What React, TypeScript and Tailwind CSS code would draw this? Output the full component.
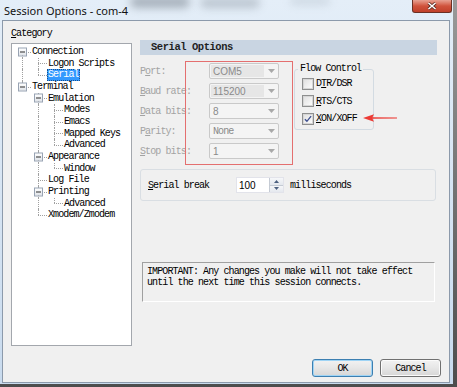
import React from "react";

type Row = {
  label: string;
  guides: ("pipe" | "none")[];
  top: boolean;
  bottom: boolean;
  box?: boolean;
  selected?: boolean;
};

const rows: Row[] = [
  { label: "Connection", guides: [], top: false, bottom: true, box: true },
  { label: "Logon Scripts", guides: ["pipe"], top: true, bottom: true },
  { label: "Serial", guides: ["pipe"], top: true, bottom: false, selected: true },
  { label: "Terminal", guides: [], top: true, bottom: false, box: true },
  { label: "Emulation", guides: ["none"], top: true, bottom: true, box: true },
  { label: "Modes", guides: ["none", "pipe"], top: true, bottom: true },
  { label: "Emacs", guides: ["none", "pipe"], top: true, bottom: true },
  { label: "Mapped Keys", guides: ["none", "pipe"], top: true, bottom: true },
  { label: "Advanced", guides: ["none", "pipe"], top: true, bottom: false },
  { label: "Appearance", guides: ["none"], top: true, bottom: true, box: true },
  { label: "Window", guides: ["none", "pipe"], top: true, bottom: false },
  { label: "Log File", guides: ["none"], top: true, bottom: true },
  { label: "Printing", guides: ["none"], top: true, bottom: true, box: true },
  { label: "Advanced", guides: ["none", "pipe"], top: true, bottom: false },
  { label: "Xmodem/Zmodem", guides: ["none"], top: true, bottom: false },
];

function TreeRow({ r }: { r: Row }) {
  return (
    <div className="flex h-[11.67px] items-center">
      {r.guides.map((g, i) => (
        <div key={i} className="relative h-full w-[16px] shrink-0">
          {g === "pipe" && (
            <div className="absolute bottom-0 left-[8px] top-0 border-l border-dotted border-[#a0a0a0]" />
          )}
        </div>
      ))}
      <div className="relative h-full w-[16px] shrink-0">
        {r.top && (
          <div className="absolute left-[8px] top-0 h-1/2 border-l border-dotted border-[#a0a0a0]" />
        )}
        {r.bottom && (
          <div className="absolute bottom-0 left-[8px] top-1/2 border-l border-dotted border-[#a0a0a0]" />
        )}
        <div className="absolute left-[8px] right-[-1px] top-1/2 border-t border-dotted border-[#a0a0a0]" />
        {r.box && (
          <div className="absolute left-[4px] top-1/2 flex h-[9px] w-[9px] -translate-y-1/2 items-center justify-center border border-[#98a3b3] bg-gradient-to-b from-white to-[#dfe3e8]">
            <div className="h-[1px] w-[5px] bg-[#2d2d2d]" />
          </div>
        )}
      </div>
      <span
        className={
          r.selected
            ? "ml-[1px] h-[12px] whitespace-nowrap border border-dotted border-[#1a4f8a] bg-[#3399ff] font-['Liberation_Mono',monospace] text-[10px] leading-[10px] tracking-[-0.9px] text-white"
            : "ml-[1px] whitespace-nowrap px-[1px] font-['Liberation_Mono',monospace] text-[10px] leading-[11.67px] tracking-[-0.9px] text-black"
        }
      >
        {r.label}
      </span>
    </div>
  );
}

function Combo({ value, split, monoText }: { value: string; split?: boolean; monoText?: boolean }) {
  return (
    <div className="flex h-[16px] w-[70px] items-center rounded-[2px] border border-[#c9c9c9] bg-[#f4f4f4]">
      <div
        className={
          split
            ? "ml-[1px] flex h-[12px] w-[53px] items-center bg-[#e6e6e6] pl-[2px]"
            : "ml-[1px] flex h-[12px] w-[53px] items-center pl-[2px]"
        }
      >
        <span
          className={
            monoText
              ? "font-['Liberation_Mono',monospace] text-[10px] tracking-[-0.9px] text-[#8a8a8a]"
              : "font-['Liberation_Sans',sans-serif] text-[10px] text-[#8a8a8a]"
          }
        >
          {value}
        </span>
      </div>
      <div className="flex flex-1 items-center justify-center">
        <svg width="7" height="4" viewBox="0 0 7 4">
          <path d="M0 0 H7 L3.5 4 Z" fill="#a8a8a8" />
        </svg>
      </div>
    </div>
  );
}

function Check({ checked, children }: { checked?: boolean; children: React.ReactNode }) {
  return (
    <div className="flex h-[17.5px] items-center">
      <div className="ml-[7px] flex h-[12px] w-[12px] items-center justify-center border border-[#8e8f8f] bg-[#f4f4f4]">
        <div className="flex h-[10px] w-[10px] items-center justify-center border border-[#d6d6d6] bg-gradient-to-br from-[#e2e2e2] to-[#fbfbfb]">
          {checked && (
            <svg width="9" height="8" viewBox="0 0 9 8">
              <path d="M1 4.2 L3.3 6.6 L8 0.8" stroke="#3d4f8f" strokeWidth="1.5" fill="none" />
            </svg>
          )}
        </div>
      </div>
      <span className="ml-[2px] font-['Liberation_Mono',monospace] text-[10px] tracking-[-0.9px] text-black">
        {children}
      </span>
    </div>
  );
}

const labelCls =
  "w-[69px] shrink-0 whitespace-nowrap font-['Liberation_Mono',monospace] text-[10px] tracking-[-0.9px] text-[#a3a3a3]";

export default function App() {
  return (
    <div className="relative h-[387px] w-[457px] overflow-hidden bg-gradient-to-b from-[#9a9a9a] to-[#4d4d4d]">
      <div className="flex h-[384px] w-[453px] flex-col bg-gradient-to-b from-[#e4eef8] to-[#c9dbee]">
        {/* title bar */}
        <div className="relative flex h-[20px] shrink-0 items-center pl-[4px]">
          <div className="absolute left-[130px] top-[-4px] h-[12px] w-[60px] rounded-full bg-[#6d7782] opacity-50 blur-[4px]" />
          <div className="absolute left-[200px] top-[-2px] h-[10px] w-[60px] rounded-full bg-[#7d8792] opacity-40 blur-[4px]" />
          <div className="absolute left-[290px] top-[-3px] h-[8px] w-[40px] rounded-full bg-[#9aa5b0] opacity-30 blur-[4px]" />
          <span className="relative font-['Noto_Sans',sans-serif] text-[11px] leading-none text-[#111]">
            Session Options - com-4
          </span>
          <div className="absolute left-[412px] top-0 flex h-[13px] w-[40px] items-center justify-center rounded-b-[3px] border border-t-0 border-[#6b3024] bg-gradient-to-b from-[#e7a192] via-[#d0533c] to-[#c0402a]">
            <svg width="10" height="8" viewBox="0 0 10 8">
              <path d="M1.5 1 L8.5 7 M8.5 1 L1.5 7" stroke="#5a2a20" strokeWidth="3" />
              <path d="M1.5 1 L8.5 7 M8.5 1 L1.5 7" stroke="#ffffff" strokeWidth="1.6" />
            </svg>
          </div>
        </div>
        {/* body */}
        <div className="mb-[1px] ml-[2px] mr-[3px] flex flex-1 flex-col border border-[#8c9aab] bg-[#f0f0f0]">
          <div className="flex h-[325px] shrink-0">
            {/* left column */}
            <div className="ml-[8px] flex flex-col">
              <div className="mt-[5px] flex h-[14px] items-center font-['Liberation_Mono',monospace] text-[10px] tracking-[-0.9px] text-black">
                <span className="underline underline-offset-1">C</span>ategory
              </div>
              <div className="mt-[3px] h-[303px] w-[121px] border border-[#a3a7ad] bg-white pl-[2px] pt-[2px]">
                {rows.map((r, i) => (
                  <TreeRow key={i} r={r} />
                ))}
              </div>
            </div>
            {/* right column */}
            <div className="relative ml-[8px] mt-[19px] flex w-[297px] flex-col">
              <div className="flex h-[15px] items-center bg-[#c9d5e2] pl-[11px] font-['Liberation_Mono',monospace] text-[10.5px] font-bold tracking-[-0.45px] text-[#1f1f1f]">
                Serial Options
              </div>
              <div className="mt-[8px] flex items-start">
                <div className="flex flex-col gap-[4px]">
                  <div className="flex h-[16px] items-center">
                    <span className={labelCls}>
                      P<span className="underline underline-offset-1">o</span>rt:
                    </span>
                    <Combo value="COM5" split />
                  </div>
                  <div className="flex h-[16px] items-center">
                    <span className={labelCls}>
                      <span className="underline underline-offset-1">B</span>aud rate:
                    </span>
                    <Combo value="115200" split />
                  </div>
                  <div className="flex h-[16px] items-center">
                    <span className={labelCls}>
                      <span className="underline underline-offset-1">D</span>ata bits:
                    </span>
                    <Combo value="8" />
                  </div>
                  <div className="flex h-[16px] items-center">
                    <span className={labelCls}>
                      P<span className="underline underline-offset-1">a</span>rity:
                    </span>
                    <Combo value="None" monoText />
                  </div>
                  <div className="flex h-[16px] items-center">
                    <span className={labelCls}>
                      <span className="underline underline-offset-1">S</span>top bits:
                    </span>
                    <Combo value="1" />
                  </div>
                </div>
                <fieldset className="ml-[15px] w-[80px] rounded-[3px] border border-[#d3dbe2] pb-[1px]">
                  <legend className="ml-[3px] px-[2px] font-['Liberation_Mono',monospace] text-[10px] leading-[12px] tracking-[-0.9px] text-black">
                    Flow Control
                  </legend>
                  <Check>
                    D<span className="underline underline-offset-1">T</span>R/DSR
                  </Check>
                  <Check>
                    <span className="underline underline-offset-1">R</span>TS/CTS
                  </Check>
                  <Check checked>
                    <span className="underline underline-offset-1">X</span>ON/XOFF
                  </Check>
                </fieldset>
              </div>
              {/* serial break */}
              <div className="mt-[10px] flex h-[32px] w-[296px] items-center rounded-[3px] border border-[#d9dee3] pl-[7px]">
                <span className="w-[88px] font-['Liberation_Mono',monospace] text-[10px] tracking-[-0.9px] text-black">
                  <span className="underline underline-offset-1">S</span>erial break
                </span>
                <div className="flex h-[16px] items-center border border-[#e2e3ea] bg-white">
                  <div className="flex h-full w-[32px] items-center pl-[2px] font-['Liberation_Sans',sans-serif] text-[10px] text-black">
                    100
                  </div>
                  <div className="flex h-full w-[14px] flex-col border-l border-[#c5cbd4]">
                    <div className="flex flex-1 items-center justify-center border-b border-[#c5cbd4] bg-gradient-to-b from-[#f6f7f9] to-[#e4e8ee]">
                      <svg width="5" height="3" viewBox="0 0 5 3">
                        <path d="M0 3 L2.5 0 L5 3 Z" fill="#4c607f" />
                      </svg>
                    </div>
                    <div className="flex flex-1 items-center justify-center bg-gradient-to-b from-[#f6f7f9] to-[#e4e8ee]">
                      <svg width="5" height="3" viewBox="0 0 5 3">
                        <path d="M0 0 L2.5 3 L5 0 Z" fill="#4c607f" />
                      </svg>
                    </div>
                  </div>
                </div>
                <span className="ml-[6px] font-['Liberation_Mono',monospace] text-[10px] tracking-[-0.9px] text-black">
                  milliseconds
                </span>
              </div>
              {/* important */}
              <div className="ml-[2px] mt-[61px] h-[40px] w-[293px] border border-b-white border-l-[#a0a0a0] border-r-white border-t-[#a0a0a0] pl-[4px] pt-[4px] font-['Liberation_Mono',monospace] text-[10px] leading-[10.5px] tracking-[-0.9px] text-black">
                IMPORTANT: Any changes you make will not take effect
                <br />
                until the next time this session connects.
              </div>
              {/* red annotation box */}
              <div className="pointer-events-none absolute left-[45px] top-[21px] h-[104px] w-[108px] border border-[#e46f6f]" />
              {/* red arrow */}
              <svg
                className="pointer-events-none absolute left-[223px] top-[73px]"
                width="34"
                height="10"
                viewBox="0 0 34 10"
              >
                <path d="M0 5 L11 1.2 L9.5 4.2 L34 4.6 L34 5.4 L9.5 5.8 L11 8.8 Z" fill="#ec3b35" />
              </svg>
            </div>
          </div>
          {/* buttons */}
          <div className="mr-[8px] mt-[13px] flex justify-end gap-[7px]">
            <div className="flex h-[18px] w-[61px] items-center justify-center rounded-[3px] border border-[#3c7fb1] bg-gradient-to-b from-[#f2f2f2] via-[#e6e6e6] to-[#d6d6d6] font-['Liberation_Mono',monospace] text-[10px] tracking-[-0.9px] text-black shadow-[inset_0_0_0_1px_#9fd4f5]">
              OK
            </div>
            <div className="flex h-[18px] w-[61px] items-center justify-center rounded-[3px] border border-[#707070] bg-gradient-to-b from-[#f2f2f2] via-[#e6e6e6] to-[#d6d6d6] font-['Liberation_Mono',monospace] text-[10px] tracking-[-0.9px] text-black shadow-[inset_0_0_0_1px_#fbfbfb]">
              Cancel
            </div>
          </div>
        </div>
      </div>
    </div>
  );
}
